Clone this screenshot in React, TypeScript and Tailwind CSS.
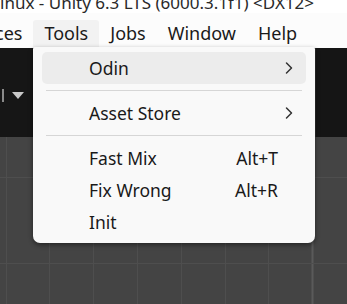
import { ChevronRight } from "lucide-react";

const menuBar = ["Tools", "Jobs", "Window", "Help"];

const items = [
  { label: "Fast Mix", shortcut: "Alt+T" },
  { label: "Fix Wrong", shortcut: "Alt+R" },
  { label: "Init", shortcut: "" },
];

function Separator() {
  return <div className="mx-[4px] my-[6px] h-px bg-[#d6d6d6]" />;
}

function SubmenuRow({ label, active }: { label: string; active?: boolean }) {
  return (
    <div
      className={`flex h-[32px] items-center justify-between rounded-[5px] pl-[47px] pr-[7px] ${
        active ? "bg-[#ececec]" : ""
      }`}
    >
      <span>{label}</span>
      <ChevronRight size={20} strokeWidth={1.8} className="text-[#333]" />
    </div>
  );
}

export default function App() {
  return (
    <div className="relative h-[304px] w-[347px] overflow-hidden bg-[#444] font-['Noto_Sans',sans-serif]">
      {/* window title, cut off at the top */}
      <div className="h-[13px] overflow-hidden bg-white">
        <div className="mt-[-6px] whitespace-nowrap text-[17px] leading-[17px] text-[#2a2a2a]">
          inux - Unity 6.3 LTS (6000.3.1f1) &lt;DX12&gt;
        </div>
      </div>

      {/* menu bar */}
      <div className="flex h-[35px] items-end bg-[#fcfcfc] text-[18px] leading-[18px] text-[#1a1a1a]">
        <div className="ml-[-5px] flex h-[28px] items-center pb-[3px] pr-[11px]">ces</div>
        {menuBar.map((m) => (
          <div
            key={m}
            className={`flex h-[28px] items-center px-[11px] pb-[3px] ${
              m === "Tools" ? "rounded-t-[3px] bg-[#f2f2f2]" : ""
            }`}
          >
            {m}
          </div>
        ))}
      </div>

      {/* editor below */}
      <div className="flex h-[89px]">
        <div className="flex w-[33px] items-center gap-[8px] bg-[#161616] pl-[2px] pt-[6px]">
          <div className="h-[13px] w-[2px] bg-[#8a8a8a]" />
          <svg width="12" height="7" viewBox="0 0 12 7">
            <polygon points="0,0 12,0 6,7" fill="#c8c8c8" />
          </svg>
        </div>
        <div className="flex-1 bg-[#1a1a1a]" />
        <div className="w-[32px] border-l border-[#2a2a2a] bg-[#151515]" />
      </div>
      <div className="relative h-[167px] bg-[#444]">
        <svg width="347" height="167" className="absolute inset-0">
          {[6, 49, 93, 137, 181, 225, 268].map((x) => (
            <line key={x} x1={x + 0.5} y1="0" x2={x + 0.5} y2="167" stroke="#4e4e4e" />
          ))}
          <line x1="312.5" y1="0" x2="312.5" y2="167" stroke="#5a5a5a" strokeWidth="2" />
          <line x1="0" y1="40.5" x2="347" y2="40.5" stroke="#4e4e4e" />
          <line x1="0" y1="126.5" x2="347" y2="126.5" stroke="#4e4e4e" />
        </svg>
      </div>

      {/* Tools dropdown */}
      <div className="absolute left-[33px] top-[47px] w-[282px] rounded-b-[7px] rounded-t-[2px] bg-[#f9f9f9] px-[9px] py-[5px] text-[17.5px] leading-[18px] text-[#1a1a1a] shadow-[0_2px_5px_rgba(0,0,0,0.45)]">
        <SubmenuRow label="Odin" active />
        <Separator />
        <SubmenuRow label="Asset Store" />
        <Separator />
        {items.map((it) => (
          <div key={it.label} className="flex h-[32px] items-center justify-between pl-[47px] pr-[28px]">
            <span>{it.label}</span>
            <span>{it.shortcut}</span>
          </div>
        ))}
      </div>
    </div>
  );
}
